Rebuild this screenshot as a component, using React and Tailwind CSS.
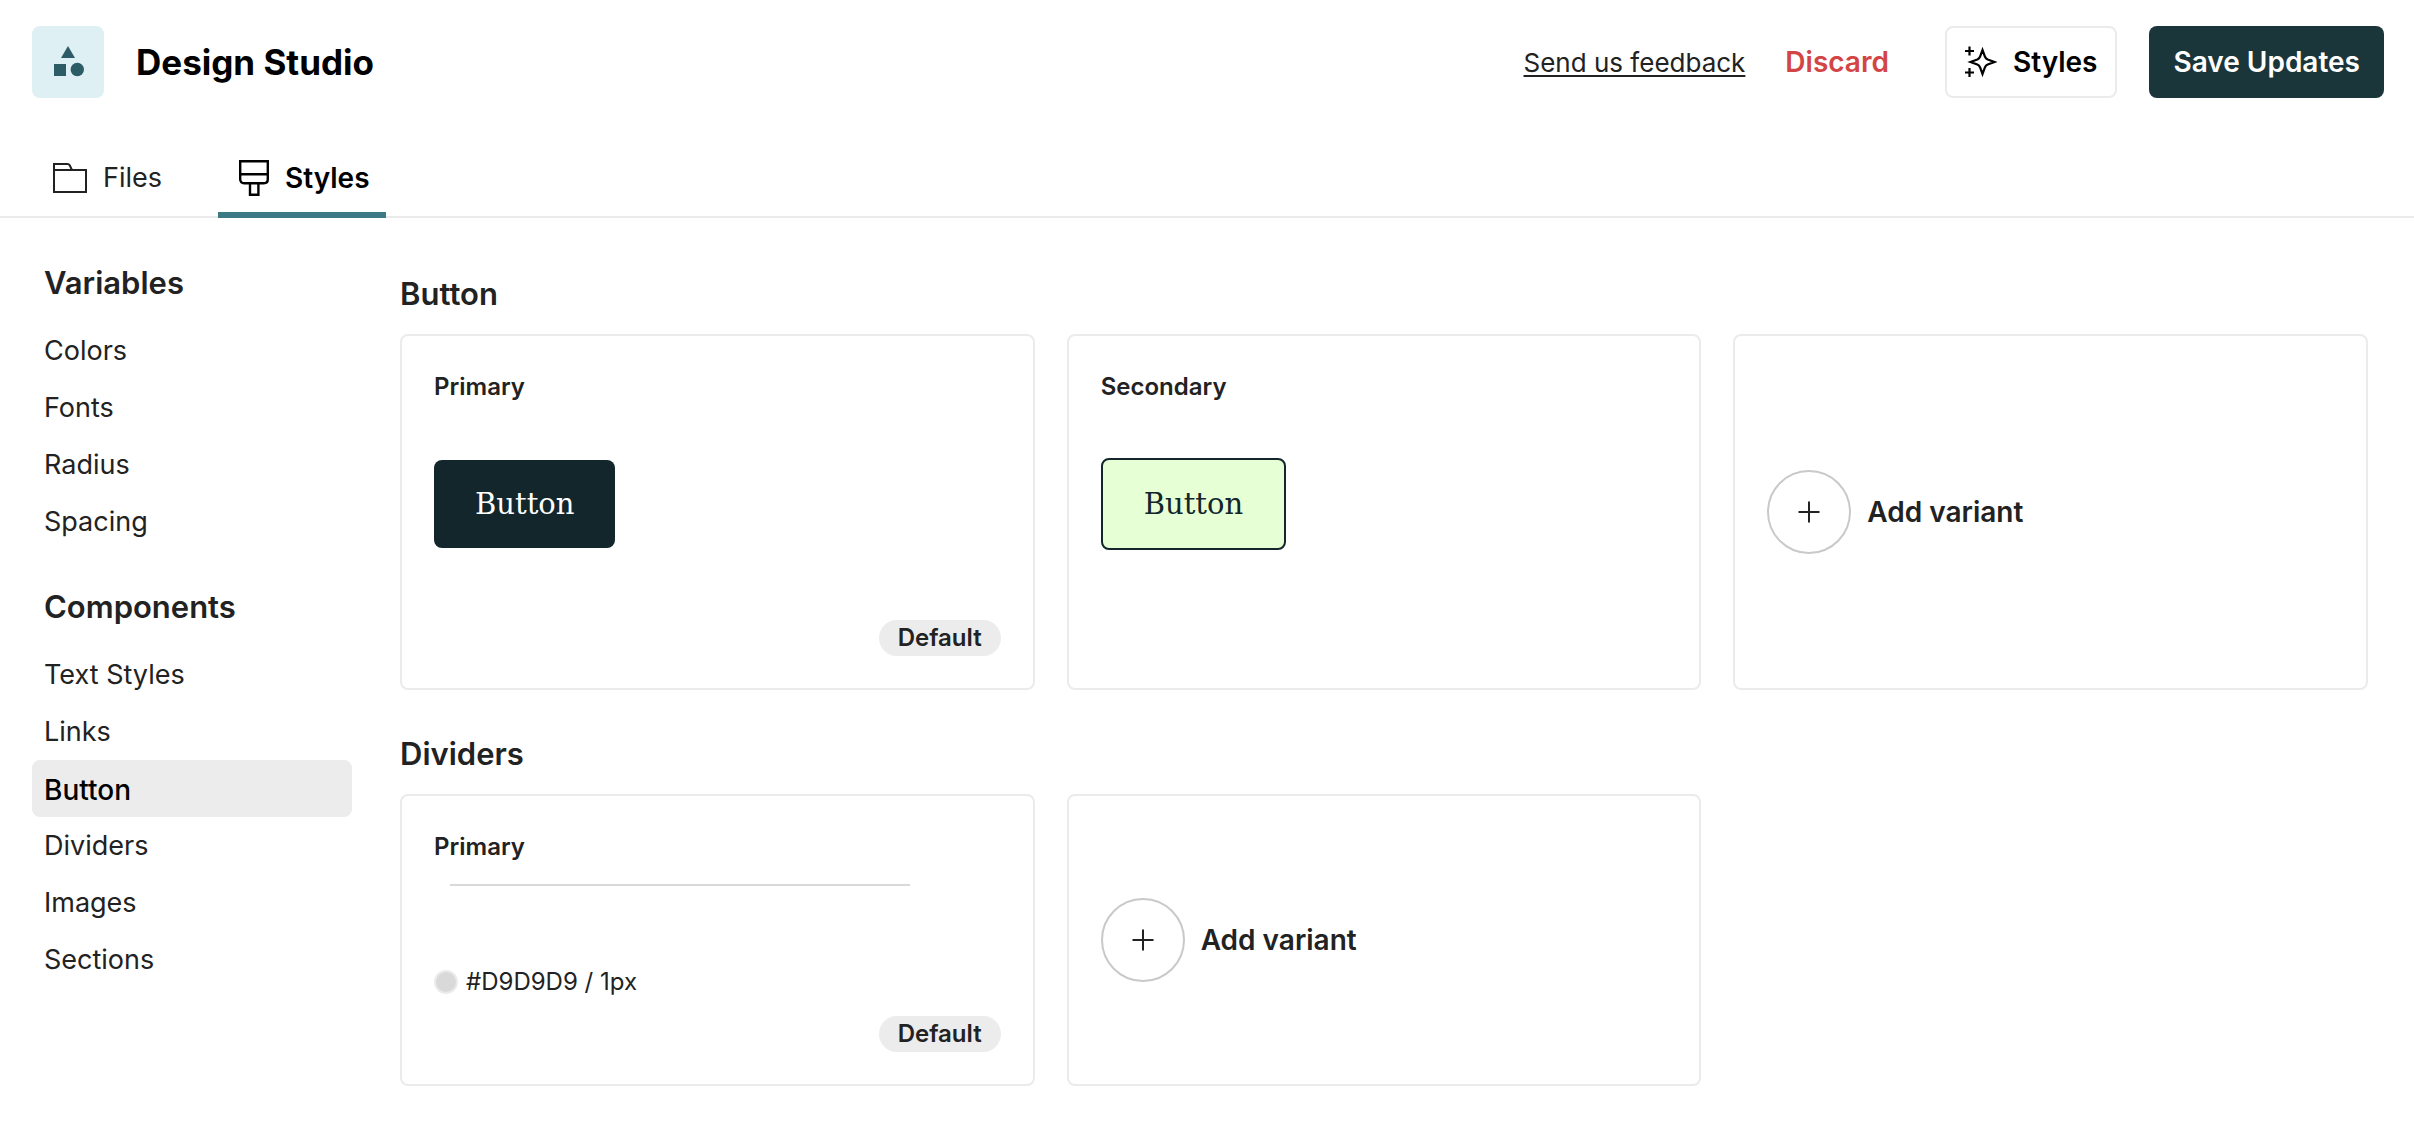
import React, { useState } from "react";

const VARIABLES = ["Colors", "Fonts", "Radius", "Spacing"];
const COMPONENTS = [
  "Text Styles",
  "Links",
  "Button",
  "Dividers",
  "Images",
  "Sections",
];

function App() {
  const [activeTab, setActiveTab] = useState("Styles");
  const [activeItem, setActiveItem] = useState("Button");

  return (
    <div className="min-h-screen bg-white font-[Inter,sans-serif] text-[#222222]">
      {/* Header */}
      <header className="flex items-center justify-between pt-[26px] pr-[30px] pl-8">
        <div className="flex items-center gap-8">
          <div className="flex size-18 items-center justify-center rounded-lg bg-[#def0f3]">
            <ShapesIcon />
          </div>
          <h1 className="text-[35px] font-bold text-black">Design Studio</h1>
        </div>
        <div className="flex items-center">
          <a
            href="#feedback"
            className="mr-10 text-[26px] underline decoration-2 underline-offset-3"
          >
            Send us feedback
          </a>
          <button
            type="button"
            className="mr-14 cursor-pointer text-[28px] font-semibold text-[#d34545]"
          >
            Discard
          </button>
          <button
            type="button"
            className="mr-8 flex h-18 cursor-pointer items-center gap-4 rounded-lg border-2 border-[#ebebeb] px-[18px] text-[28px] font-semibold text-black"
          >
            <SparkleIcon />
            Styles
          </button>
          <button
            type="button"
            className="h-18 cursor-pointer rounded-lg bg-[#1b363b] px-6 text-[28px] font-semibold text-white"
          >
            Save Updates
          </button>
        </div>
      </header>

      {/* Tabs */}
      <nav className="mt-[46px] flex gap-10 border-b-2 border-[#ebebeb] px-8">
        <Tab
          label="Files"
          icon={<FolderIcon />}
          active={activeTab === "Files"}
          onClick={() => setActiveTab("Files")}
        />
        <Tab
          label="Styles"
          icon={<BrushIcon />}
          active={activeTab === "Styles"}
          onClick={() => setActiveTab("Styles")}
        />
      </nav>

      <div className="flex gap-12 pr-[46px] pl-8">
        {/* Sidebar */}
        <aside className="w-80 shrink-0 pt-[45px]">
          <NavGroup
            title="Variables"
            items={VARIABLES}
            activeItem={activeItem}
            onSelect={setActiveItem}
          />
          <NavGroup
            title="Components"
            items={COMPONENTS}
            activeItem={activeItem}
            onSelect={setActiveItem}
          />
        </aside>

        {/* Variants */}
        <main className="min-w-0 flex-1 pt-14">
          <Section title="Button">
            <Card title="Primary" className="min-h-[356px]" isDefault>
              <Preview>
                <button
                  type="button"
                  className="h-22 cursor-pointer rounded-lg bg-[#12262b] px-[41px] pt-[2px] font-[DejaVu_Serif,serif] text-[29px] text-white"
                >
                  Button
                </button>
              </Preview>
            </Card>
            <Card title="Secondary" className="min-h-[356px]">
              <Preview>
                <button
                  type="button"
                  className="h-23 cursor-pointer rounded-lg border-2 border-[#12262b] bg-[#e7ffd4] px-[41px] pt-[2px] font-[DejaVu_Serif,serif] text-[29px] text-[#12262b]"
                >
                  Button
                </button>
              </Preview>
            </Card>
            <AddVariant />
          </Section>

          <Section title="Dividers">
            <Card title="Primary" className="min-h-[292px]" isDefault>
              <hr className="mt-5 mr-[91px] ml-4 border-t-2 border-[#d9d9d9]" />
              <div className="mt-[84px] flex items-center gap-2 text-[24px] leading-6">
                <span className="size-6 rounded-full border-2 border-[#ebebeb] bg-[#d9d9d9]" />
                #D9D9D9 / 1px
              </div>
            </Card>
            <AddVariant />
          </Section>
        </main>
      </div>
    </div>
  );
}

function Tab({ label, icon, active, onClick }) {
  return (
    <button
      type="button"
      onClick={onClick}
      className={`-mb-[2px] flex h-[74px] cursor-pointer items-center gap-4 border-b-6 pr-4 pl-[21px] ${
        active
          ? "border-[#3d7885] text-[28px] font-semibold text-black"
          : "border-transparent text-[27px]"
      }`}
    >
      {icon}
      {label}
    </button>
  );
}

function NavGroup({ title, items, activeItem, onSelect }) {
  return (
    <div className="mb-[37px]">
      <h2 className="mb-[19px] px-3 text-[31px] leading-10 font-semibold">
        {title}
      </h2>
      <ul>
        {items.map((item) => (
          <li key={item}>
            <button
              type="button"
              onClick={() => onSelect(item)}
              className={`block h-[57px] w-full cursor-pointer rounded-lg px-3 pt-[2px] text-left ${
                item === activeItem
                  ? "bg-[#ececec] text-[28px] font-medium text-black"
                  : "text-[27px]"
              }`}
            >
              {item}
            </button>
          </li>
        ))}
      </ul>
    </div>
  );
}

function Section({ title, children }) {
  return (
    <section className="mb-11">
      <h2 className="mb-5 text-[31px] leading-10 font-semibold">{title}</h2>
      <div className="grid grid-cols-3 gap-8">{children}</div>
    </section>
  );
}

function Card({ title, isDefault, className, children }) {
  return (
    <div
      className={`flex flex-col rounded-lg border-2 border-[#ebebeb] px-8 pt-[34px] pb-8 ${className}`}
    >
      <h3 className="text-[24px] leading-[34px] font-semibold">{title}</h3>
      {children}
      {isDefault && (
        <span className="mt-auto self-end rounded-full bg-[#ececec] px-[19px] text-[24px] leading-9 font-semibold">
          Default
        </span>
      )}
    </div>
  );
}

function Preview({ children }) {
  return <div className="flex h-[200px] items-center">{children}</div>;
}

function AddVariant() {
  return (
    <button
      type="button"
      className="flex cursor-pointer items-center gap-4 rounded-lg border-2 border-[#ebebeb] px-8 text-[28px] font-semibold"
    >
      <span className="flex size-21 items-center justify-center rounded-full border-2 border-[#c9c9c9]">
        <svg width="22" height="22" viewBox="0 0 22 22" fill="none">
          <path d="M11 0.5v21M0.5 11h21" stroke="currentColor" strokeWidth="2" />
        </svg>
      </span>
      Add variant
    </button>
  );
}

// Icons
const ShapesIcon = () => (
  <svg width="32" height="32" viewBox="0 0 32 32" fill="#2c5c66">
    <path d="M16 0l7 12H9z" />
    <path d="M2 18h12v12H2z" />
    <circle cx="25.3" cy="23.5" r="6.7" />
  </svg>
);

const FolderIcon = () => (
  <svg
    width="34"
    height="30"
    viewBox="0 0 34 30"
    fill="none"
    stroke="currentColor"
    strokeWidth="2"
  >
    <path d="M1 7h32v22H1z" />
    <path d="M1 7V1h13.5q1.5 0 2.2 1.3L19 7" />
  </svg>
);

const BrushIcon = () => (
  <svg
    width="30"
    height="36"
    viewBox="0 0 30 36"
    fill="none"
    stroke="currentColor"
    strokeWidth="2.4"
  >
    <path d="M1.200 1.200h27.600v18q0 4-4 4H5.200q-4 0-4-4z" />
    <path d="M1 14.300h28M11 23v11.800h8.400V23" />
  </svg>
);

const SparkleIcon = () => (
  <svg
    width="32"
    height="32"
    viewBox="0 0 32 32"
    fill="none"
    stroke="currentColor"
    strokeWidth="2.2"
  >
    <path d="M17.500 4L20 10.800Q20.800 12.700 22.700 13.500L29.500 16L22.700 18.500Q20.800 19.300 20 21.200L17.500 28L15 21.200Q14.200 19.300 12.300 18.500L5.500 16L12.300 13.500Q14.200 12.700 15 10.800Z" />
    <path d="M4.500 0.500v9M0 5h9M4.500 22v9M0 26.500h9" />
  </svg>
);

export default App;
